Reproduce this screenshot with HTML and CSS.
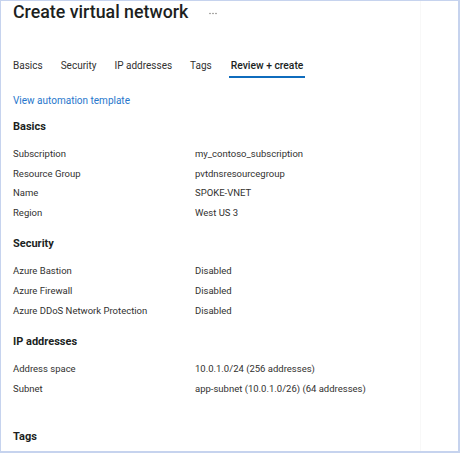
FILE: index.html
```html
<!DOCTYPE html>
<html lang="en">
<head>
    <meta charset="UTF-8">
    <title>Create virtual network</title>
    <link rel="stylesheet" href="styles.css">
</head>
<body>
    <div class="frame">
        <div class="title-row">
            <h1>Create virtual network</h1>
            <svg class="more" width="8" height="3" viewBox="0 0 8 3">
                <circle cx="1" cy="1.5" r="0.8"/>
                <circle cx="4" cy="1.5" r="0.8"/>
                <circle cx="7" cy="1.5" r="0.8"/>
            </svg>
        </div>

        <nav class="tabs">
            <span class="tab">Basics</span>
            <span class="tab">Security</span>
            <span class="tab">IP addresses</span>
            <span class="tab">Tags</span>
            <span class="tab active">Review + create</span>
        </nav>

        <a class="template-link" href="#">View automation template</a>

        <h2>Basics</h2>
        <div class="summary">
            <span>Subscription</span><span>my_contoso_subscription</span>
            <span>Resource Group</span><span>pvtdnsresourcegroup</span>
            <span>Name</span><span>SPOKE-VNET</span>
            <span>Region</span><span>West US 3</span>
        </div>

        <h2>Security</h2>
        <div class="summary">
            <span>Azure Bastion</span><span>Disabled</span>
            <span>Azure Firewall</span><span>Disabled</span>
            <span>Azure DDoS Network Protection</span><span>Disabled</span>
        </div>

        <h2>IP addresses</h2>
        <div class="summary">
            <span>Address space</span><span>10.0.1.0/24 (256 addresses)</span>
            <span>Subnet</span><span>app-subnet (10.0.1.0/26) (64 addresses)</span>
        </div>

        <h2 class="tags-heading">Tags</h2>
    </div>
</body>
</html>
```

FILE: styles.css
```css
html, body {
    margin: 0;
    padding: 0;
    background: #ffffff;
}
body {
    font-family: Roboto, 'Open Sans', sans-serif;
    color: #323130;
    width: 460px;
    height: 453px;
    overflow: hidden;
}
.frame {
    box-sizing: border-box;
    width: 460px;
    height: 453px;
    border: 1px solid #c6d3ee;
    border-right-width: 2px;
    border-bottom-width: 2px;
    padding: 0 12px;
    overflow: hidden;
    background: linear-gradient(to right, transparent 419px, #f8f8f8 419px, #f8f8f8 420px, transparent 420px);
}
.title-row {
    display: flex;
    align-items: center;
    gap: 21px;
    height: 22px;
}
h1 {
    margin: 0;
    font-size: 17.8px;
    line-height: 22px;
    font-weight: 500;
    color: #201f1e;
}
.more {
    fill: #8a8886;
    margin-top: 2px;
}
.tabs {
    display: flex;
    gap: 18px;
    margin-top: 36px;
    font-size: 10px;
    line-height: 14px;
}
.tab {
    padding-bottom: 3px;
    border-bottom: 2px solid transparent;
}
.active {
    font-weight: 500;
    font-size: 10.3px;
    color: #201f1e;
    border-bottom-color: #0f6cbd;
    padding: 0 2px 3px;
    margin-left: -1px;
}
.template-link {
    display: block;
    margin-top: 16px;
    font-size: 10px;
    line-height: 14px;
    color: #2677cc;
    text-decoration: none;
}
h2 {
    margin: 13.5px 0 9px;
    font-size: 11px;
    line-height: 16px;
    font-weight: 700;
    color: #201f1e;
}
.template-link + h2 {
    margin-top: 11px;
}
.summary {
    display: grid;
    grid-template-columns: 182px 1fr;
    font-size: 9.5px;
    line-height: 19.7px;
}
.tags-heading {
    margin-top: 31px;
}
```
